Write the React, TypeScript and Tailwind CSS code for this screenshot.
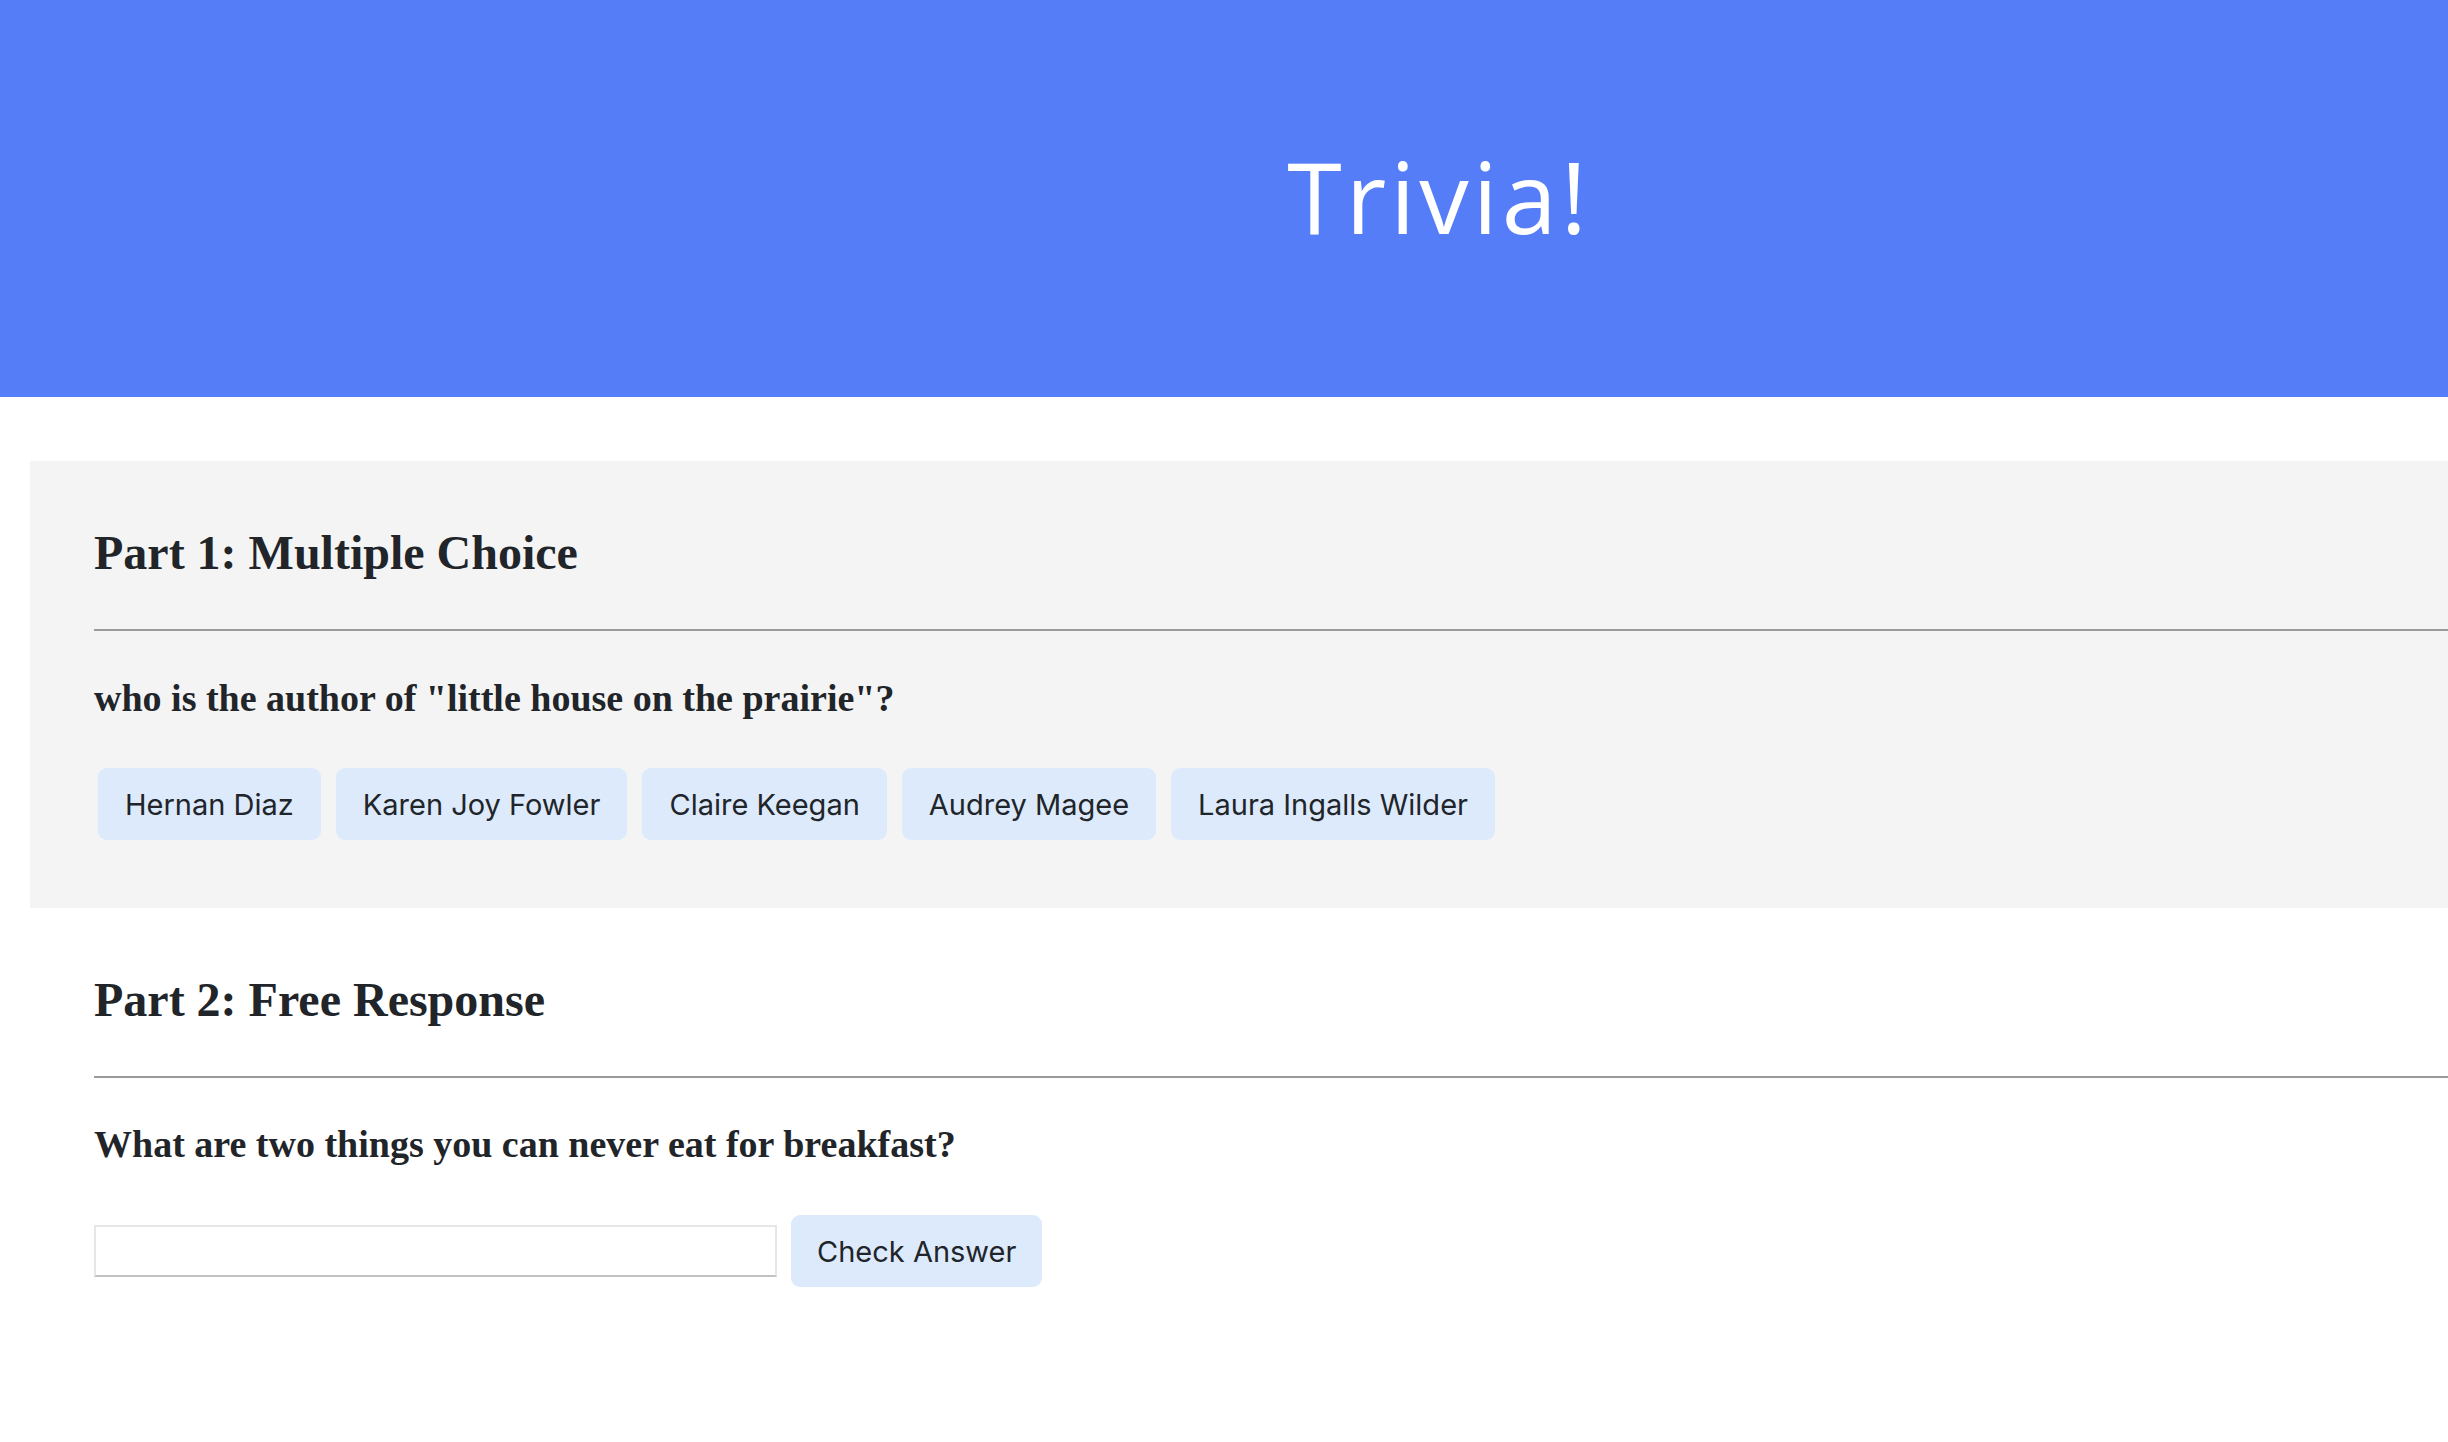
import { useState } from "react";

const choices = ["Hernan Diaz", "Karen Joy Fowler", "Claire Keegan", "Audrey Magee", "Laura Ingalls Wilder"];

const serif = "font-['Liberation_Serif','Times_New_Roman',serif]";
const sans = "font-['Inter','Liberation_Sans',sans-serif]";

function ChoiceButton({ label }: { label: string }) {
  return (
    <button
      className={`${sans} h-[72px] px-[27px] rounded-[9px] bg-[#dceafb] text-[#212529] text-[29px] leading-none`}
    >
      {label}
    </button>
  );
}

export default function App() {
  const [answer, setAnswer] = useState("");

  return (
    <div className="min-h-screen bg-white text-[#212529]">
      <header className="h-[397px] bg-[#557df8] flex items-center justify-center pl-[430px]">
        <h1 className="font-['Open_Sans','DejaVu_Sans',sans-serif] text-white text-[99px] font-medium leading-none tracking-[4px] pb-[6px]">
          Trivia!
        </h1>
      </header>

      <section className="mt-[64px] ml-[30px] bg-[#f4f4f4] pt-[64px] pb-[68px] pl-[64px]">
        <h2 className={`${serif} text-[48px] font-bold leading-[56px]`}>Part 1: Multiple Choice</h2>
        <hr className="mt-[48px] border-0 border-t-2 border-[#9a9a9a]" />
        <h3 className={`${serif} mt-[46px] text-[38px] font-bold leading-[43px]`}>
          who is the author of "little house on the prairie"?
        </h3>
        <div className="mt-[48px] ml-[4px] flex gap-[15px]">
          {choices.map((c) => (
            <ChoiceButton key={c} label={c} />
          ))}
        </div>
      </section>

      <section className="ml-[30px] pt-[64px] pl-[64px] pb-[120px]">
        <h2 className={`${serif} text-[48px] font-bold leading-[56px]`}>Part 2: Free Response</h2>
        <hr className="mt-[48px] border-0 border-t-2 border-[#9a9a9a]" />
        <h3 className={`${serif} mt-[45px] text-[38px] font-bold leading-[43px]`}>
          What are two things you can never eat for breakfast?
        </h3>
        <div className="mt-[49px] flex items-center gap-[14px]">
          <input
            value={answer}
            onChange={(e) => setAnswer(e.target.value)}
            className="w-[683px] h-[52px] bg-white border-2 border-[#e6e6e6] border-b-[#c2c2c2] outline-none px-2 text-[30px]"
          />
          <button
            className={`${sans} h-[72px] px-[26px] rounded-[9px] bg-[#dceafb] text-[#212529] text-[29px] leading-none`}
          >
            Check Answer
          </button>
        </div>
      </section>
    </div>
  );
}
